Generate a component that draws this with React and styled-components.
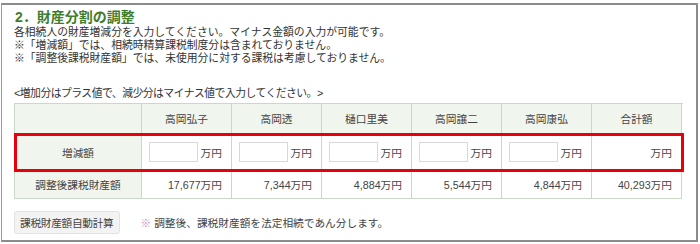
import React from 'react'
import styled, { createGlobalStyle } from 'styled-components'

const GlobalStyle = createGlobalStyle`
  html, body {
    margin: 0;
    padding: 0;
    background: #ffffff;
  }
  body {
    font-family: "Liberation Sans", "Noto Sans CJK JP", sans-serif;
    color: #333333;
  }
`

const heirs = [
  { name: '高岡弘子', amount: '17,677' },
  { name: '高岡透', amount: '7,344' },
  { name: '樋口里美', amount: '4,884' },
  { name: '高岡譲二', amount: '5,544' },
  { name: '高岡康弘', amount: '4,844' },
]

const App = () => {
  return (
    <>
      <GlobalStyle />
      <Frame>
        <Title>2．財産分割の調整</Title>
        <Lead>
          <Line>各相続人の財産増減分を入力してください。マイナス金額の入力が可能です。</Line>
          <Line>※「増減額」では、相続時精算課税制度分は含まれておりません。</Line>
          <Line>※「調整後課税財産額」では、未使用分に対する課税は考慮しておりません。</Line>
        </Lead>
        <Hint>&lt;増加分はプラス値で、減少分はマイナス値で入力してください。&gt;</Hint>

        <Table>
          <Row $height={30}>
            <Cell $head />
            {heirs.map(h => (
              <Cell key={h.name} $head $align="center">{h.name}</Cell>
            ))}
            <Cell $head $align="center">合計額</Cell>
          </Row>
          <Row $height={37} $marked>
            <Cell $head $align="center">増減額</Cell>
            {heirs.map(h => (
              <Cell key={h.name} $align="right">
                <AmountInput type="text" />
                <Unit>万円</Unit>
              </Cell>
            ))}
            <Cell $align="right"><Unit>万円</Unit></Cell>
          </Row>
          <Row $height={28}>
            <Cell $head $align="center">調整後課税財産額</Cell>
            {heirs.map(h => (
              <Cell key={h.name} $align="right">{h.amount}万円</Cell>
            ))}
            <Cell $align="right">40,293万円</Cell>
          </Row>
        </Table>

        <Footer>
          <CalcButton>課税財産額自動計算</CalcButton>
          <Note><Mark>※</Mark> 調整後、課税財産額を法定相続であん分します。</Note>
        </Footer>
      </Frame>
    </>
  )
}

export default App

const Frame = styled.div`
  box-sizing: border-box;
  width: 697px;
  height: 239px;
  margin: 3px 0 0 1px;
  border: 2px solid #8c8c8c;
  border-left: 1px solid #9a9a9a;
  padding: 4px 12px 0 12px;
`
const Title = styled.h2`
  margin: 0 0 0 1px;
  font-size: 14px;
  line-height: 17px;
  font-weight: bold;
  color: #3f7d2c;
`
const Lead = styled.div`
  font-size: 10.8px;
  line-height: 13px;
  color: #333;
`
const Line = styled.div`
  white-space: nowrap;
`
const Hint = styled.div`
  margin-top: 22px;
  font-size: 10.8px;
  line-height: 13px;
  letter-spacing: -0.5px;
  color: #333;
`
const Table = styled.div`
  margin-top: 3px;
  width: 669px;
  border-top: 1px solid #cbd8c8;
  border-left: 1px solid #cbd8c8;
  box-sizing: border-box;
`
const Row = styled.div`
  display: grid;
  grid-template-columns: 127px repeat(6, 90px);
  height: ${p => p.$height}px;
  position: relative;
  ${p => p.$marked && `
    outline: 3px solid #e8000b;
    outline-offset: -2px;
    z-index: 1;
  `}
`
const Cell = styled.div`
  display: flex;
  align-items: center;
  justify-content: ${p => (p.$align === 'right' ? 'flex-end' : 'center')};
  padding: 0 ${p => (p.$align === 'right' ? '9px' : '4px')} 0 4px;
  border-right: 1px solid #cbd8c8;
  border-bottom: 1px solid #cbd8c8;
  background: ${p => (p.$head ? '#f0f5ed' : '#ffffff')};
  font-size: 10.7px;
  color: #444;
  white-space: nowrap;
`
const AmountInput = styled.input`
  box-sizing: border-box;
  width: 49px;
  height: 20px;
  margin: 0 3px 0 0;
  padding: 0 3px;
  border: 1px solid #d9d9d9;
  border-radius: 0;
  font-size: 11px;
  outline: none;
`
const Unit = styled.span`
  font-size: 10.7px;
  color: #444;
`
const Footer = styled.div`
  display: flex;
  align-items: center;
  gap: 21px;
  margin-top: 12px;
`
const CalcButton = styled.button`
  height: 23px;
  padding: 0 5px;
  border: 1px solid #e2e2e2;
  border-radius: 3px;
  background: #f3f3f3;
  font-family: "Liberation Sans", "Noto Sans CJK JP", sans-serif;
  font-size: 10.7px;
  letter-spacing: -0.3px;
  color: #444;
`
const Note = styled.span`
  font-size: 10.7px;
  color: #444;
`
const Mark = styled.span`
  color: #c78fc0;
`
